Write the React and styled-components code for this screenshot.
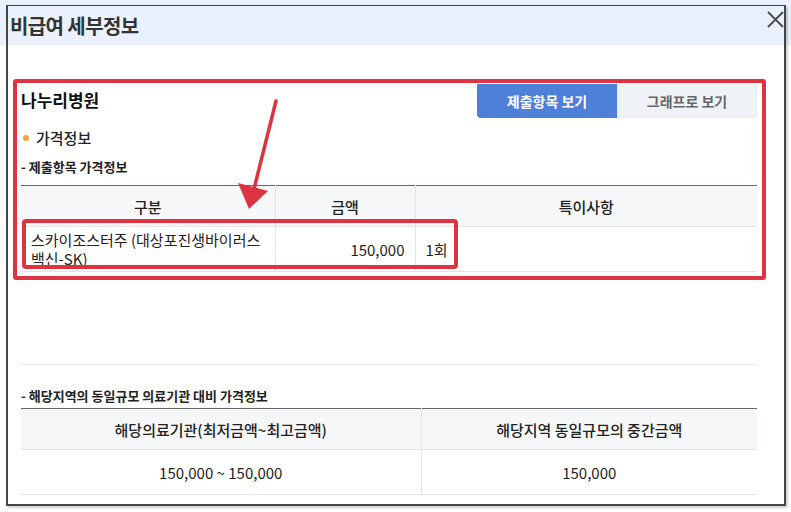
import styled, { createGlobalStyle } from "styled-components";

const GlobalStyle = createGlobalStyle`
  html, body {
    margin: 0;
    padding: 0;
    background: #ffffff;
  }
  body {
    font-family: "Noto Sans CJK KR", "Noto Sans", sans-serif;
    color: #222;
  }
`;

const Page = styled.div`
  width: 791px;
  height: 512px;
  padding: 5px 0 0 6px;
  box-sizing: border-box;
  background: linear-gradient(#eaf1fc 0, #eaf1fc 45px, #ffffff 45px);
  overflow: hidden;
`;

const Modal = styled.div`
  width: 780px;
  height: 501px;
  box-sizing: border-box;
  border: 2px solid #454545;
  border-top-width: 1px;
  background: #fff;
  box-shadow: 2px 2px 2px rgba(0, 0, 0, 0.18);
  display: flex;
  flex-direction: column;
`;

const Header = styled.div`
  position: relative;
  height: 39px;
  background: #eaf1fc;
  display: flex;
  align-items: center;
  padding-left: 2px;
`;

const Title = styled.h1`
  margin: 0;
  font-size: 20px;
  font-weight: 700;
  color: #333;
  letter-spacing: -0.6px;
`;

const CloseButton = styled.button`
  position: absolute;
  right: 0;
  top: 5px;
  width: 18px;
  height: 18px;
  padding: 0;
  border: 0;
  background: none;
  cursor: pointer;
`;

const Body = styled.div`
  padding: 34px 18px 0 5px;
`;

const RedFrame = styled.div`
  position: relative;
  border: 4px solid #de3341;
  border-radius: 3px;
  padding: 1px 5px 4px 4px;
`;

const TopRow = styled.div`
  display: flex;
  justify-content: space-between;
  align-items: flex-start;
`;

const Hospital = styled.h2`
  margin: 4px 0 0;
  font-size: 17px;
  font-weight: 700;
  color: #111;
  line-height: 24px;
`;

const Tabs = styled.div`
  display: flex;
`;

const Tab = styled.button`
  width: 140px;
  height: 34px;
  border: 1px solid ${(p) => (p.$active ? "#4d80d6" : "#e3e8ee")};
  border-top: 0;
  background: ${(p) => (p.$active ? "#4d80d6" : "#eff3f7")};
  color: ${(p) => (p.$active ? "#fff" : "#666")};
  font-family: inherit;
  font-size: 14px;
  font-weight: 700;
  border-radius: ${(p) => (p.$active ? "0 0 0 4px" : "0 0 4px 0")};
  padding: 0;
`;

const Bullet = styled.div`
  display: flex;
  align-items: center;
  gap: 7px;
  margin: 8px 0 0 2px;
  font-size: 15px;
  font-weight: 500;
  line-height: 24px;
  &::before {
    content: "";
    width: 6px;
    height: 6px;
    border-radius: 50%;
    background: #f0a336;
  }
`;

const SubTitle = styled.div`
  font-size: 13px;
  font-weight: 700;
  color: #222;
  line-height: 20px;
  margin-top: ${(p) => p.$top || 0}px;
`;

const Table = styled.table`
  width: 100%;
  border-collapse: collapse;
  table-layout: fixed;
  border-top: 1px solid #666;
  margin-top: ${(p) => p.$top || 0}px;
`;

const Th = styled.th`
  height: 40px;
  padding: 0;
  background: #f6f7f9;
  font-size: 15px;
  font-weight: 500;
  color: #222;
  border-bottom: 1px solid #e4e4e4;
  border-left: 1px solid #e4e4e4;
  &:first-child {
    border-left: 0;
  }
`;

const Td = styled.td`
  height: 44px;
  padding: 0 10px;
  font-size: 15px;
  line-height: 19px;
  color: #222;
  text-align: ${(p) => p.$align || "left"};
  border-bottom: 1px solid #e4e4e4;
  border-left: 1px solid #e4e4e4;
  &:first-child {
    border-left: 0;
  }
`;

const RowMark = styled.div`
  position: absolute;
  left: 5px;
  top: 136px;
  width: 436px;
  height: 50px;
  box-sizing: border-box;
  border: 4px solid #de3341;
  border-radius: 4px;
  pointer-events: none;
`;

const Arrow = styled.svg`
  position: absolute;
  left: 211px;
  top: 14px;
  pointer-events: none;
`;

const Divider = styled.div`
  margin: 84px 9px 0 8px;
  border-bottom: 1px solid #e8e8e8;
`;

const Lower = styled.div`
  padding: 0 9px 0 8px;
`;

export default function App() {
  return (
    <>
      <GlobalStyle />
      <Page>
        <Modal>
          <Header>
            <Title>비급여 세부정보</Title>
            <CloseButton aria-label="닫기">
              <svg width="17" height="17" viewBox="0 0 17 17">
                <path d="M1 1 L16 16 M16 1 L1 16" stroke="#4a4a4a" strokeWidth="1.8" />
              </svg>
            </CloseButton>
          </Header>
          <Body>
            <RedFrame>
              <TopRow>
                <Hospital>나누리병원</Hospital>
                <Tabs>
                  <Tab $active>제출항목 보기</Tab>
                  <Tab>그래프로 보기</Tab>
                </Tabs>
              </TopRow>
              <Bullet>가격정보</Bullet>
              <SubTitle $top={7}>- 제출항목 가격정보</SubTitle>
              <Table $top={8}>
                <colgroup>
                  <col style={{ width: 254 }} />
                  <col style={{ width: 140 }} />
                  <col />
                </colgroup>
                <thead>
                  <tr>
                    <Th>구분</Th>
                    <Th>금액</Th>
                    <Th>특이사항</Th>
                  </tr>
                </thead>
                <tbody>
                  <tr>
                    <Td>스카이조스터주 (대상포진생바이러스 백신-SK)</Td>
                    <Td $align="right">150,000</Td>
                    <Td>1회</Td>
                  </tr>
                </tbody>
              </Table>
              <RowMark />
              <Arrow width="60" height="120" viewBox="0 0 60 120">
                <line x1="48" y1="4" x2="26" y2="92" stroke="#de3341" strokeWidth="3.5" strokeLinecap="round" />
                <polygon points="10,86 40,94 21,112" fill="#de3341" />
              </Arrow>
            </RedFrame>
            <Divider />
            <Lower>
              <SubTitle $top={21}>- 해당지역의 동일규모 의료기관 대비 가격정보</SubTitle>
              <Table $top={2}>
                <colgroup>
                  <col style={{ width: 400 }} />
                  <col />
                </colgroup>
                <thead>
                  <tr>
                    <Th>해당의료기관(최저금액~최고금액)</Th>
                    <Th>해당지역 동일규모의 중간금액</Th>
                  </tr>
                </thead>
                <tbody>
                  <tr>
                    <Td $align="center">150,000 ~ 150,000</Td>
                    <Td $align="center">150,000</Td>
                  </tr>
                </tbody>
              </Table>
            </Lower>
          </Body>
        </Modal>
      </Page>
    </>
  );
}
